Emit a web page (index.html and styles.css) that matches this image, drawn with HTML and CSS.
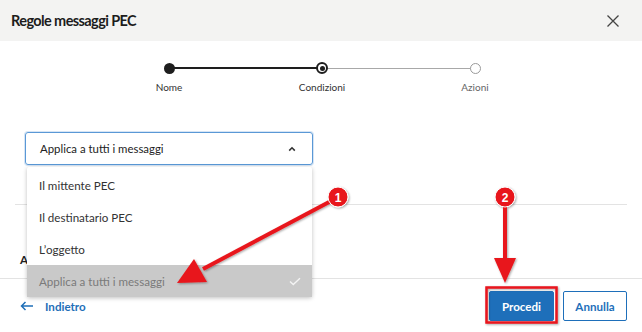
FILE: index.html
```html
<!DOCTYPE html>
<html lang="it">
<head>
  <meta charset="UTF-8">
  <title>Regole messaggi PEC</title>
  <link rel="stylesheet" href="styles.css">
</head>
<body>
  <div class="modal">
    <!-- Intestazione -->
    <div class="modal-header">
      <span class="modal-title">Regole messaggi PEC</span>
      <svg class="close-icon" width="14" height="14" viewBox="0 0 14 14">
        <path d="M1.5 1.5 L12.5 12.5 M12.5 1.5 L1.5 12.5" stroke="#444" stroke-width="1.3" fill="none"/>
      </svg>
    </div>

    <!-- Stepper -->
    <div class="stepper">
      <div class="step">
        <div class="dot-box"><span class="dot done"></span></div>
        <span class="step-label">Nome</span>
      </div>
      <div class="line line-done"></div>
      <div class="step">
        <div class="dot-box"><span class="dot current"></span></div>
        <span class="step-label">Condizioni</span>
      </div>
      <div class="line line-todo"></div>
      <div class="step">
        <div class="dot-box"><span class="dot todo"></span></div>
        <span class="step-label">Azioni</span>
      </div>
    </div>

    <!-- Corpo -->
    <div class="modal-body">
      <div class="select-wrap">
        <div class="select">
          <span>Applica a tutti i messaggi</span>
          <svg width="8" height="6" viewBox="0 0 8 6">
            <path d="M1.2 4.6 L4 1.8 L6.8 4.6" stroke="#333" stroke-width="1.6" fill="none"/>
          </svg>
        </div>
        <ul class="dropdown">
          <li>Il mittente PEC</li>
          <li>Il destinatario PEC</li>
          <li>L’oggetto</li>
          <li class="selected">
            Applica a tutti i messaggi
            <svg width="12" height="9" viewBox="0 0 12 9">
              <path d="M1 4.5 L4.3 7.6 L11 1.2" stroke="#f4f4f4" stroke-width="1.4" fill="none"/>
            </svg>
          </li>
        </ul>
      </div>
      <div class="divider"></div>
      <div class="field-label">A</div>
    </div>

    <!-- Piede -->
    <div class="modal-footer">
      <a class="back-link">
        <svg width="14" height="10" viewBox="0 0 14 10">
          <path d="M13 5 H1.5 M5.5 1 L1.5 5 L5.5 9" stroke="#1f6fb8" stroke-width="1.5" fill="none"/>
        </svg>
        Indietro
      </a>
      <div class="actions">
        <button class="btn btn-primary">Procedi</button>
        <button class="btn btn-outline">Annulla</button>
      </div>
    </div>

    <!-- Annotazioni -->
    <svg class="annotations" width="642" height="332" viewBox="0 0 642 332">
      <defs>
        <filter id="shadow" x="-20%" y="-20%" width="140%" height="140%">
          <feDropShadow dx="1" dy="1" stdDeviation="1" flood-color="#000" flood-opacity="0.35"/>
        </filter>
      </defs>
      <g filter="url(#shadow)" fill="#e8161c" stroke="#e8161c">
        <line x1="331" y1="201" x2="203" y2="269" stroke-width="4"/>
        <polygon points="177,283 194,259 207,282" stroke="none"/>
        <line x1="505" y1="205" x2="505" y2="262" stroke-width="4"/>
        <polygon points="494,258 516,258 505,283" stroke="none"/>
        <rect x="486.5" y="287.5" width="70" height="35" fill="none" stroke-width="2.5"/>
        <circle cx="338" cy="197" r="10" stroke="#fff" stroke-width="1"/>
        <circle cx="505" cy="197" r="10" stroke="#fff" stroke-width="1"/>
      </g>
      <text x="338" y="201.5" class="badge-num">1</text>
      <text x="505" y="201.5" class="badge-num">2</text>
    </svg>
  </div>
</body>
</html>
```

FILE: styles.css
```css
/* Base */
html, body {
  margin: 0;
  padding: 0;
  background: #fff;
  font-family: Lato, "Open Sans", sans-serif;
  color: #222;
}
.modal {
  position: relative;
  width: 642px;
  height: 332px;
  display: flex;
  flex-direction: column;
  overflow: hidden;
}
/* Intestazione */
.modal-header {
  height: 41px;
  flex: none;
  display: flex;
  align-items: center;
  justify-content: space-between;
  padding: 0 22px 0 11px;
  background: #f3f3f2;
}
.modal-title {
  font-size: 14.5px;
  font-weight: 700;
  letter-spacing: -0.6px;
  color: #1c1c1c;
}
/* Stepper */
.stepper {
  display: flex;
  align-items: flex-start;
  width: 306px;
  margin: 21px 0 0 169px;
}
.step {
  position: relative;
  z-index: 1;
  width: 0;
  display: flex;
  flex-direction: column;
  align-items: center;
}
.dot-box {
  width: 12px;
  height: 12px;
  flex: none;
  display: flex;
  align-items: center;
  justify-content: center;
}
.dot {
  box-sizing: border-box;
  border-radius: 50%;
}
.dot.done {
  width: 11px;
  height: 11px;
  background: #1e1e1e;
}
.dot.current {
  width: 12px;
  height: 12px;
  border: 2px solid #1e1e1e;
  background: #fff;
  display: flex;
  align-items: center;
  justify-content: center;
}
.dot.current::after {
  content: "";
  width: 5px;
  height: 5px;
  border-radius: 50%;
  background: #1e1e1e;
}
.dot.todo {
  width: 11px;
  height: 11px;
  border: 1.5px solid #9a9a9a;
  background: #fff;
}
.step-label {
  margin-top: 7px;
  font-size: 10px;
  line-height: 12px;
  color: #333;
  white-space: nowrap;
}
.step:last-child .step-label {
  color: #666;
}
.line {
  flex: 1;
  margin-top: 5px;
}
.line-done {
  height: 2px;
  background: #1e1e1e;
}
.line-todo {
  height: 1px;
  margin-top: 5.5px;
  background: #a8a8a8;
}
/* Corpo */
.modal-body {
  flex: 1;
  padding: 0 15px;
}
.select-wrap {
  position: relative;
  width: 288px;
  margin: 39px 0 0 10px;
}
.select {
  box-sizing: border-box;
  height: 33px;
  display: flex;
  align-items: center;
  justify-content: space-between;
  padding: 0 16px 0 14px;
  border: 1px solid #5a98d6;
  border-radius: 3px;
  box-shadow: 0 0 0 1px rgba(90, 152, 214, 0.25);
  font-size: 11.4px;
  color: #222;
}
.dropdown {
  position: absolute;
  top: 35px;
  left: 2px;
  width: 285px;
  margin: 0;
  padding: 2px 0 0;
  list-style: none;
  background: #fff;
  box-shadow: 0 1px 4px rgba(0, 0, 0, 0.25);
  border-radius: 2px;
  z-index: 5;
}
.dropdown li {
  height: 32px;
  display: flex;
  align-items: center;
  justify-content: space-between;
  padding: 0 11px 0 12px;
  font-size: 11.6px;
  color: #333;
}
.dropdown li.selected {
  background: #c9c9c9;
  color: #7a7a7a;
}
.divider {
  height: 1px;
  margin-top: 39px;
  background: #e3e3e3;
}
.field-label {
  margin-top: 48px;
  padding-left: 5px;
  font-size: 11.6px;
  font-weight: 700;
  color: #222;
}
/* Piede */
.modal-footer {
  height: 54px;
  flex: none;
  box-sizing: border-box;
  display: flex;
  align-items: flex-start;
  justify-content: space-between;
  padding: 12px 15px 0 20px;
  border-top: 1px solid #e3e3e3;
}
.back-link {
  display: flex;
  align-items: center;
  gap: 11px;
  height: 30px;
  font-size: 11.6px;
  font-weight: 700;
  color: #1f6fb8;
}
.actions {
  display: flex;
  gap: 9px;
}
.btn {
  height: 30px;
  box-sizing: border-box;
  padding: 0;
  font-family: Lato, sans-serif;
  font-size: 11.6px;
  font-weight: 700;
  border-radius: 2px;
}
.btn-primary {
  width: 65px;
  background: #1e6fba;
  border: 1px solid #1e6fba;
  color: #fff;
}
.btn-outline {
  width: 64px;
  background: #fff;
  border: 1px solid #1e6fba;
  color: #1e6fba;
}
/* Annotazioni */
.annotations {
  position: absolute;
  top: 0;
  left: 0;
  pointer-events: none;
  z-index: 10;
}
.badge-num {
  font-family: "Liberation Sans", Arial, sans-serif;
  font-size: 12px;
  font-weight: 700;
  fill: #fff;
  text-anchor: middle;
}
```
